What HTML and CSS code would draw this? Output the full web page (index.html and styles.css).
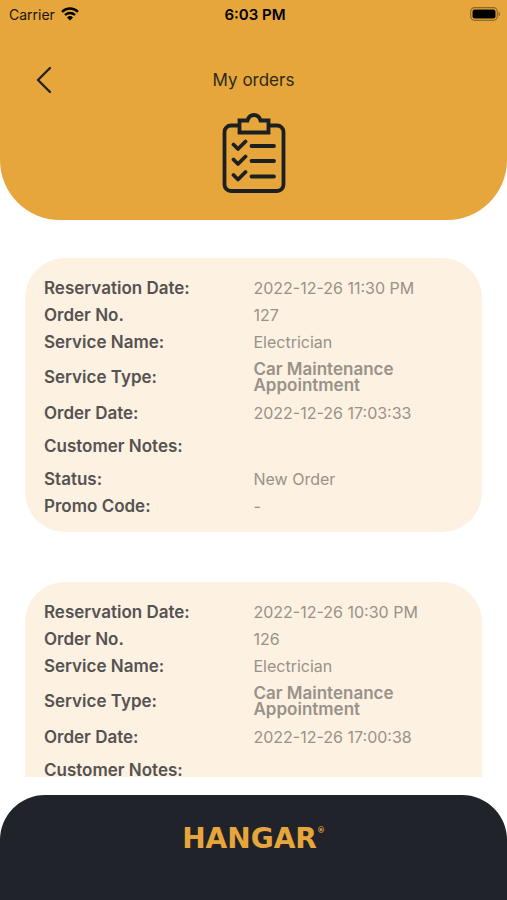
FILE: index.html
```html
<!DOCTYPE html>
<html lang="en">
<head>
<meta charset="utf-8">
<meta name="viewport" content="width=device-width, initial-scale=1">
<title>My orders</title>
<link rel="stylesheet" href="styles.css">
</head>
<body>
<header class="header">
  <div class="status">
    <div class="carrier">
      <span>Carrier</span>
      <svg width="18" height="14" viewBox="0 0 18 14" aria-hidden="true">
        <path d="M1 4.8a11.5 11.5 0 0 1 16 0M4 8a7.2 7.2 0 0 1 10 0" fill="none" stroke="#000" stroke-width="2.4"/>
        <path d="M6 10.400a4.300 4.300 0 0 1 6 0L9 13.600z"/>
      </svg>
    </div>
    <span class="time">6:03 PM</span>
    <svg class="battery" width="31" height="14" viewBox="0 0 31 14" aria-hidden="true">
      <rect x=".7" y=".7" width="26.600" height="12.600" rx="4" fill="none" stroke="#8f6823" stroke-width="1.200"/>
      <rect x="2.500" y="2.500" width="23" height="9" rx="2.200"/>
      <path d="M28.700 4.600q3 2.400 0 4.800z" fill="#8f6823"/>
    </svg>
  </div>
  <div class="nav">
    <button class="back" type="button" aria-label="Back">
      <svg width="18" height="28" viewBox="0 0 18 28" aria-hidden="true">
        <path d="M15 2 3 14l12 12" fill="none" stroke="#20241f" stroke-width="2.400" stroke-linecap="round" stroke-linejoin="round"/>
      </svg>
    </button>
    <h1 class="title">My orders</h1>
  </div>
  <svg class="clipboard" width="64" height="82" viewBox="0 0 64 82" fill="none" stroke="#1d2020" stroke-width="3.800" stroke-linecap="round" stroke-linejoin="round" aria-hidden="true">
    <path d="M17 13.500H9a6.500 6.500 0 0 0-6.500 6.500v52.500A6.500 6.500 0 0 0 9 79h46a6.500 6.500 0 0 0 6.500-6.500V20a6.500 6.500 0 0 0-6.500-6.500h-8"/>
    <path d="M17.500 8.500h8c1-3.500 3.300-5.500 6.500-5.500s5.500 2 6.500 5.500h8v12h-29z" stroke-linejoin="miter"/>
    <path d="m11.500 32.500 4.500 4.500 7.500-7.500M29.500 34H52m-40.500 13.500L16 52l7.500-7.500M29.500 49H52M11.500 63l4.500 4.500 7.500-7.500M29.500 64.500H52"/>
  </svg>
</header>

<main class="orders">
  <dl class="card">
    <div class="row"><dt>Reservation Date:</dt><dd>2022-12-26 11:30 PM</dd></div>
    <div class="row"><dt>Order No.</dt><dd>127</dd></div>
    <div class="row"><dt>Service Name:</dt><dd>Electrician</dd></div>
    <div class="row type"><dt>Service Type:</dt><dd>Car Maintenance Appointment</dd></div>
    <div class="row"><dt>Order Date:</dt><dd>2022-12-26 17:03:33</dd></div>
    <div class="row notes"><dt>Customer Notes:</dt><dd></dd></div>
    <div class="row"><dt>Status:</dt><dd>New Order</dd></div>
    <div class="row"><dt>Promo Code:</dt><dd>-</dd></div>
  </dl>
  <dl class="card">
    <div class="row"><dt>Reservation Date:</dt><dd>2022-12-26 10:30 PM</dd></div>
    <div class="row"><dt>Order No.</dt><dd>126</dd></div>
    <div class="row"><dt>Service Name:</dt><dd>Electrician</dd></div>
    <div class="row type"><dt>Service Type:</dt><dd>Car Maintenance Appointment</dd></div>
    <div class="row"><dt>Order Date:</dt><dd>2022-12-26 17:00:38</dd></div>
    <div class="row notes"><dt>Customer Notes:</dt><dd></dd></div>
  </dl>
</main>

<footer class="footer">
  <div class="logo">HANGAR<span class="mark">®</span></div>
</footer>
</body>
</html>
```
FILE: styles.css
```css
* { box-sizing: border-box; }

body {
  margin: 0;
  height: 100vh;
  display: flex;
  flex-direction: column;
  background: #fff;
  font-family: Inter, "Liberation Sans", sans-serif;
  font-size: 16px;
}

.header {
  flex: none;
  display: flex;
  flex-direction: column;
  align-items: center;
  padding-bottom: 26px;
  background: #e7a63b;
  border-radius: 0 0 60px 60px;
}

.status {
  width: 100%;
  height: 28px;
  padding: 0 6px 0 9px;
  display: grid;
  grid-template-columns: 1fr auto 1fr;
  align-items: center;
  font-size: 14px;
  color: #17140c;
}

.carrier { display: flex; align-items: center; gap: 6px; }
.time { font-size: 15px; font-weight: 600; color: #000; }
.battery { justify-self: end; }

.nav {
  width: 100%;
  height: 84px;
  padding: 22px 35px 0;
  display: grid;
  grid-template-columns: 1fr auto 1fr;
  align-items: center;
  align-content: start;
}

.back {
  justify-self: start;
  display: flex;
  padding: 16px 0;
  border: 0;
  background: none;
  cursor: pointer;
}

.title {
  margin: 0;
  font-size: 17px;
  font-weight: 400;
  color: #2b2a1e;
}

.orders {
  flex: 1;
  min-height: 0;
  overflow-y: auto;
  scrollbar-width: none;
  margin: 38px 25px 18px;
  display: flex;
  flex-direction: column;
  gap: 50px;
}

.card {
  flex: none;
  min-height: 274px;
  margin: 0;
  padding: 16px 19px 13px;
  background: #fdf1e2;
  border-radius: 40px;
}

.row {
  min-height: 27px;
  display: grid;
  grid-template-columns: 1fr 1fr;
  align-items: center;
  line-height: 16px;
}

.type { min-height: 44px; }
.notes { min-height: 39px; }

dt { font-size: 17px; font-weight: 600; color: #555352; }
dd { margin: 0; color: #999288; }
.type dd { font-size: 17px; font-weight: 600; }

.footer {
  flex: none;
  height: 105px;
  padding-top: 28px;
  display: flex;
  justify-content: center;
  background: #20232a;
  border-radius: 45px 45px 0 0;
}

.logo {
  display: flex;
  align-items: flex-start;
  height: 32px;
  line-height: 32px;
  font-family: "DejaVu Sans", sans-serif;
  font-size: 28px;
  font-weight: 700;
  color: #e7a63b;
}

.mark { font-size: 8px; line-height: 16px; }
```
